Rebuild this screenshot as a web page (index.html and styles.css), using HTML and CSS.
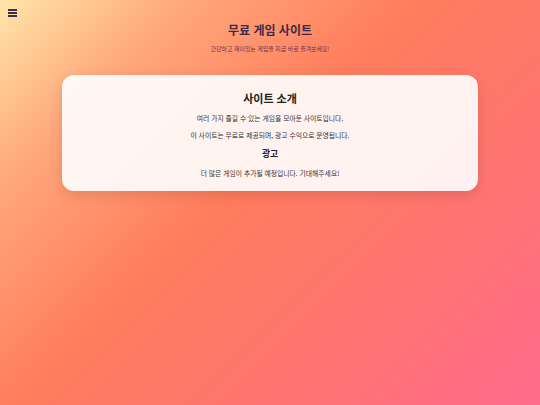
FILE: index.html
```html
<!DOCTYPE html>
<html lang="ko">
<head>
<meta charset="utf-8">
<title>무료 게임 사이트</title>
<link rel="stylesheet" href="styles.css">
</head>
<body>
<button class="menu-btn" aria-label="메뉴">
  <span class="bar"></span><span class="bar"></span><span class="bar"></span>
</button>
<header class="site-header">
  <h1 class="site-title">무료 게임 사이트</h1>
  <p class="site-subtitle">간단하고 재미있는 게임을 지금 바로 즐겨보세요!</p>
</header>
<main class="content">
  <section class="card">
    <h2 class="card-title">사이트 소개</h2>
    <p class="card-text">여러 가지 즐길 수 있는 게임을 모아둔 사이트입니다.</p>
    <p class="card-text">이 사이트는 무료로 제공되며, 광고 수익으로 운영됩니다.</p>
    <h3 class="card-subtitle">광고</h3>
    <p class="card-text">더 많은 게임이 추가될 예정입니다. 기대해주세요!</p>
  </section>
</main>
</body>
</html>
```

FILE: styles.css
```css
* { box-sizing: border-box; }
html, body {
  margin: 0;
  height: 100%;
}
body {
  font-family: "Noto Sans CJK KR", "Noto Sans", sans-serif;
  background: linear-gradient(135deg, #ffe6a9 0%, #ffa77b 20%, #ff7d5d 44%, #ff7472 72%, #ff6b8b 100%);
  min-height: 405px;
  color: #333;
}
.menu-btn {
  position: absolute;
  top: 9px;
  left: 8px;
  width: 9px;
  height: 8px;
  padding: 0;
  border: 0;
  background: none;
  display: flex;
  flex-direction: column;
  justify-content: space-between;
}
.menu-btn .bar {
  display: block;
  width: 9px;
  height: 1.6px;
  background: #3b2d4c;
}
.site-header {
  text-align: center;
  padding-top: 20px;
}
.site-title {
  margin: 0;
  font-size: 12px;
  line-height: 20px;
  font-weight: 700;
  color: #3b2a48;
}
.site-subtitle {
  margin: 5px 0 0;
  font-size: 5.9px;
  line-height: 8px;
  color: #6a3352;
}
.content {
  padding: 22px 62px 0;
}
.card {
  background: rgba(255, 255, 255, 0.9);
  border-radius: 12px;
  box-shadow: 0 4px 14px rgba(0, 0, 0, 0.12);
  text-align: center;
  padding: 15px 20px 13px;
}
.card-title {
  margin: 0 0 7px;
  font-size: 11px;
  line-height: 16px;
  font-weight: 700;
  color: #222;
}
.card-text {
  margin: 0 0 7px;
  font-size: 6.8px;
  line-height: 10px;
  color: #333;
}
.card-text:last-child {
  margin-bottom: 0;
}
.card-subtitle {
  margin: 8px 0 8px;
  font-size: 8.8px;
  line-height: 12px;
  font-weight: 700;
  color: #222;
}
```
